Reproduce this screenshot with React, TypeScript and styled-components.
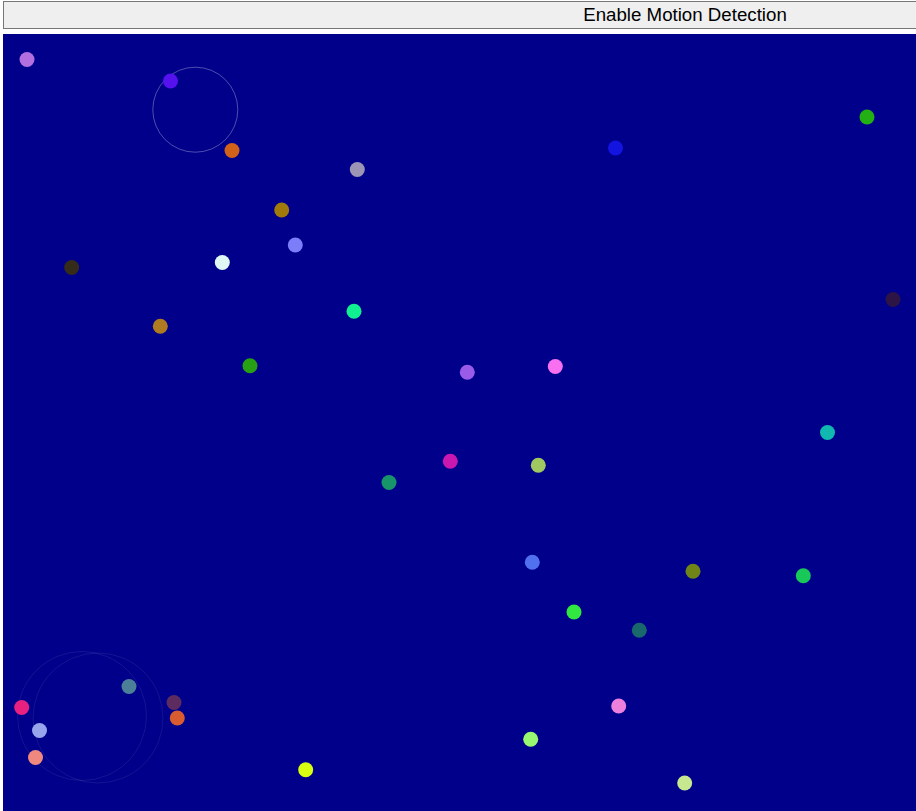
import styled, { createGlobalStyle } from "styled-components"

const GlobalStyle = createGlobalStyle`
  html, body {
    margin: 0;
    padding: 0;
    overflow: hidden;
    background: #ffffff;
  }
`

interface Dot {
  x: number
  y: number
  color: string
}

interface Ring {
  x: number
  y: number
  r: number
  opacity: number
}

// positions are page coordinates, shifted into the canvas below
const CANVAS_LEFT = 3
const CANVAS_TOP = 34

const dots: Dot[] = [
  { x: 27, y: 59.5, color: "#b36fe0" },
  { x: 170.5, y: 81, color: "#5511ee" },
  { x: 232, y: 150.5, color: "#d2621a" },
  { x: 357.3, y: 169.5, color: "#9d95b5" },
  { x: 615.5, y: 148, color: "#1414e0" },
  { x: 867, y: 117, color: "#22b014" },
  { x: 281.7, y: 210, color: "#a07a0a" },
  { x: 295.3, y: 245, color: "#7b7ef8" },
  { x: 222.3, y: 262.5, color: "#e0f8f4" },
  { x: 71.7, y: 267.5, color: "#342c18" },
  { x: 893, y: 299.5, color: "#2c1444" },
  { x: 354, y: 311.3, color: "#10f090" },
  { x: 160.3, y: 326.3, color: "#b07a20" },
  { x: 250, y: 365.7, color: "#28a014" },
  { x: 467.3, y: 372.3, color: "#9a5ce8" },
  { x: 555.3, y: 366.5, color: "#f870f0" },
  { x: 827.5, y: 432.5, color: "#10b8b0" },
  { x: 450.3, y: 461.3, color: "#c818b0" },
  { x: 538.3, y: 465.3, color: "#a0c860" },
  { x: 389, y: 482.5, color: "#18946a" },
  { x: 532.3, y: 562.3, color: "#5070f0" },
  { x: 693, y: 571.3, color: "#708418" },
  { x: 803.3, y: 575.7, color: "#18c858" },
  { x: 574, y: 612, color: "#30e840" },
  { x: 639.3, y: 630.3, color: "#18686c" },
  { x: 129, y: 686.5, color: "#4c8098" },
  { x: 174, y: 702.5, color: "#5c2c60" },
  { x: 177.3, y: 718, color: "#d85c30" },
  { x: 21.7, y: 707.5, color: "#e82080" },
  { x: 39.5, y: 730.5, color: "#98a4ec" },
  { x: 35.5, y: 757.5, color: "#f08880" },
  { x: 618.7, y: 706, color: "#ec80dc" },
  { x: 530.7, y: 739.3, color: "#98f870" },
  { x: 305.7, y: 769.7, color: "#d8ff10" },
  { x: 684.7, y: 783, color: "#c8e890" },
]

const rings: Ring[] = [
  { x: 195.3, y: 109.7, r: 42.5, opacity: 0.3 },
  { x: 82, y: 716, r: 64.5, opacity: 0.08 },
  { x: 98, y: 718, r: 65, opacity: 0.08 },
]

const Page = styled.div`
  display: flex;
  flex-direction: column;
  align-items: flex-start;
  gap: 5px;
  padding: 1px 0 0 3px;
`

const ToggleButton = styled.button`
  box-sizing: border-box;
  width: 1364px;
  height: 28px;
  flex-shrink: 0;
  padding: 0 6px;
  border: 1px solid #767676;
  border-radius: 0;
  background-color: #efefef;
  color: #000000;
  font-family: "Liberation Sans", Arial, sans-serif;
  font-size: 18.7px;
  line-height: 26px;
  text-align: center;
  cursor: pointer;
`

const Stage = styled.div`
  width: 1364px;
  height: 800px;
  flex-shrink: 0;
  background-color: #00008a;
  overflow: hidden;
`

const StageDrawing = styled.svg`
  display: block;
  width: 100%;
  height: 100%;
`

const App = () => {
  return (
    <>
      <GlobalStyle />
      <Page>
        <ToggleButton type="button">Enable Motion Detection</ToggleButton>
        <Stage>
          <StageDrawing viewBox="0 0 1364 800">
            {rings.map((ring, i) => (
              <circle
                key={`ring-${i}`}
                cx={ring.x - CANVAS_LEFT}
                cy={ring.y - CANVAS_TOP}
                r={ring.r}
                fill="none"
                stroke={`rgba(255, 255, 255, ${ring.opacity})`}
                strokeWidth={1}
              />
            ))}
            {dots.map((dot, i) => (
              <circle
                key={`dot-${i}`}
                cx={dot.x - CANVAS_LEFT}
                cy={dot.y - CANVAS_TOP}
                r={7.5}
                fill={dot.color}
              />
            ))}
          </StageDrawing>
        </Stage>
      </Page>
    </>
  )
}

export default App
